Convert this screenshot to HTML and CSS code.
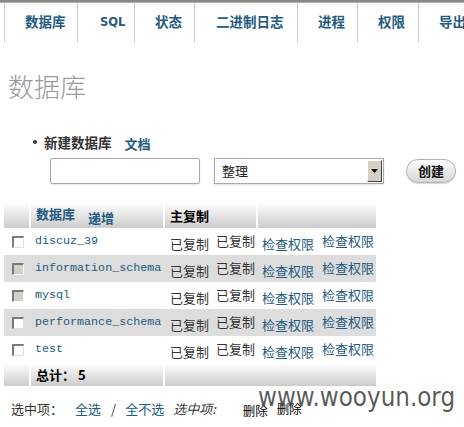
FILE: index.html
```html
<!DOCTYPE html>
<html>
<head>
<meta charset="utf-8">
<link rel="stylesheet" href="styles.css">
</head>
<body>
<div class="topbar"></div>
<nav class="tabs">
  <a class="tab t1">数据库</a>
  <a class="tab t2">SQL</a>
  <a class="tab t3">状态</a>
  <a class="tab t4">二进制日志</a>
  <a class="tab t5">进程</a>
  <a class="tab t6">权限</a>
  <a class="tab t7">导出</a>
</nav>
<h2 class="title">数据库</h2>
<div class="create">
  <div class="create-head">
    <span class="bullet"></span>
    <span class="create-label">新建数据库</span>
    <a class="doc">文档</a>
  </div>
  <div class="create-form">
    <span class="input"></span>
    <span class="select"><span class="select-text">整理</span><span class="select-btn"><svg width="7" height="4" viewBox="0 0 7 4"><path d="M0 0H7L3.5 4Z" fill="#000"/></svg></span></span>
    <span class="button">创建</span>
  </div>
</div>
<table class="dbtable">
  <colgroup>
    <col class="c1"><col class="c2"><col class="c3"><col class="c4"><col class="c5"><col class="c6">
  </colgroup>
  <thead>
    <tr class="grad head">
      <th></th>
      <th><span class="hlink">数据库</span><span class="hsort">递增</span></th>
      <th colspan="2" class="hblack">主复制</th>
      <th colspan="2"></th>
    </tr>
  </thead>
  <tbody>
    <tr>
      <td><span class="cb"></span></td>
      <td class="name">discuz_39</td>
      <td class="rep">已复制</td><td class="rep up">已复制</td>
      <td class="chk">检查权限</td><td class="chk up">检查权限</td>
    </tr>
    <tr class="alt">
      <td><span class="cb dis"></span></td>
      <td class="name">information_schema</td>
      <td class="rep">已复制</td><td class="rep up">已复制</td>
      <td class="chk">检查权限</td><td class="chk up">检查权限</td>
    </tr>
    <tr>
      <td><span class="cb dis"></span></td>
      <td class="name">mysql</td>
      <td class="rep">已复制</td><td class="rep up">已复制</td>
      <td class="chk">检查权限</td><td class="chk up">检查权限</td>
    </tr>
    <tr class="alt">
      <td><span class="cb"></span></td>
      <td class="name">performance_schema</td>
      <td class="rep">已复制</td><td class="rep up">已复制</td>
      <td class="chk">检查权限</td><td class="chk up">检查权限</td>
    </tr>
    <tr>
      <td><span class="cb"></span></td>
      <td class="name">test</td>
      <td class="rep">已复制</td><td class="rep up">已复制</td>
      <td class="chk">检查权限</td><td class="chk up">检查权限</td>
    </tr>
  </tbody>
  <tfoot>
    <tr class="grad total">
      <th></th>
      <th class="hblack">总计： 5</th>
      <th colspan="4"></th>
    </tr>
  </tfoot>
</table>
<div class="footer">
  <span class="f-label">选中项：</span>
  <a class="f-link">全选</a>
  <span class="f-sep">/</span>
  <a class="f-link f-none">全不选</a>
  <span class="f-italic">选中项:</span>
  <span class="f-del low">删除</span>
  <span class="f-del">删除</span>
</div>
<div class="watermark">www.wooyun.org</div>
</body>
</html>
```
FILE: styles.css
```css
html, body {
  margin: 0;
  padding: 0;
  background: #fff;
  overflow: hidden;
}
body {
  width: 464px;
  height: 427px;
  position: relative;
  font-family: "Noto Sans CJK SC", "DejaVu Sans", sans-serif;
  font-size: 13px;
  color: #333;
}
.topbar {
  height: 3px;
  background: linear-gradient(#8a8a8a 0, #8a8a8a 2px, #b0b0b0 2px);
}
.tabs {
  display: flex;
  margin-left: 4px;
  height: 39px;
  white-space: nowrap;
}
.tab {
  display: block;
  flex: none;
  box-sizing: border-box;
  border-left: 1px solid #ccc;
  padding: 9px 0 0 20px;
  font-weight: bold;
  font-size: 13.5px;
  line-height: 18px;
  color: #235a81;
}
.t1 { width: 73px; }
.t2 { width: 57px; padding-left: 22px; font-family: "DejaVu Sans", sans-serif; font-size: 11.5px; padding-top: 10px; }
.t3 { width: 60px; }
.t4 { width: 103px; padding-left: 21px; }
.t5 { width: 60px; }
.t6 { width: 61px; }
.t7 { width: 60px; }
.title {
  margin: 29px 0 0 8px;
  font-size: 26px;
  line-height: 30px;
  font-weight: 300;
  color: #9a9a9a;
}
.create {
  margin: 30px 0 0 33px;
}
.create-head {
  display: flex;
  align-items: center;
  height: 22px;
}
.bullet {
  width: 4px;
  height: 4px;
  border-radius: 50%;
  background: #333;
  margin-right: 7px;
}
.create-label {
  font-weight: bold;
  font-size: 13.5px;
  color: #333;
}
.doc {
  margin-left: 13px;
  margin-top: 3px;
  font-weight: bold;
  color: #235a81;
}
.create-form {
  display: flex;
  align-items: center;
  margin: 5px 0 0 17px;
}
.input {
  width: 148px;
  height: 24px;
  border: 1px solid #a9a9a9;
  border-radius: 2px;
  box-shadow: 0 1px 2px rgba(0,0,0,0.12);
}
.select {
  display: flex;
  align-items: stretch;
  width: 168px;
  height: 24px;
  margin-left: 14px;
  border: 1px solid #a9a9a9;
  box-shadow: 0 1px 2px rgba(0,0,0,0.12);
}
.select-text {
  flex: 1;
  padding-left: 7px;
  line-height: 24px;
  color: #222;
}
.select-btn {
  width: 13px;
  margin: 1px;
  background: #d4d0c8;
  border-top: 1px solid #fff;
  border-left: 1px solid #fff;
  border-right: 1px solid #404040;
  border-bottom: 1px solid #404040;
  display: flex;
  align-items: center;
  justify-content: center;
}
.button {
  margin-left: 22px;
  width: 48px;
  height: 22px;
  border: 1px solid #b0b0b0;
  border-radius: 12px;
  background: linear-gradient(#ffffff, #e6e6e6 60%, #d6d6d6);
  box-shadow: 0 1px 1px rgba(0,0,0,0.15);
  text-align: center;
  line-height: 22px;
  font-weight: bold;
  color: #111;
}
.dbtable {
  margin: 18px 0 0 4px;
  border-collapse: collapse;
  table-layout: fixed;
  width: 372px;
}
.c1 { width: 26px; }
.c2 { width: 134px; }
.c3 { width: 48px; }
.c4 { width: 45px; }
.c5 { width: 60px; }
.c6 { width: 59px; }
.dbtable th, .dbtable td {
  padding: 0;
  text-align: left;
  white-space: nowrap;
  overflow: visible;
  line-height: 17px;
}
.grad th {
  background: linear-gradient(#ffffff, #cccccc);
  border-left: 2px solid #fff;
  font-weight: bold;
  padding-left: 5px;
}
.grad th:first-child { border-left: none; }
.head { height: 26px; }
.total { height: 23px; }
.hlink {
  color: #235a81;
  font-weight: bold;
  vertical-align: 2px;
}
.hsort {
  margin-left: 13px;
  color: #235a81;
  font-weight: bold;
  vertical-align: -2px;
}
.hblack { color: #000; }
.dbtable tbody tr { height: 27px; }
.dbtable tbody td { vertical-align: middle; }
.dbtable tbody tr.alt td { background: #dddddd; }
.dbtable td:first-child { padding-left: 8px; }
.cb {
  display: block;
  width: 9px;
  height: 9px;
  border-top: 2px solid #7a7a7a;
  border-left: 2px solid #7a7a7a;
  border-right: 1px solid #e0e0e0;
  border-bottom: 1px solid #e0e0e0;
  background: #fff;
}
.cb.dis { background: #d4d0c8; border-right-color: #fff; border-bottom-color: #fff; }
.name {
  font-family: "Liberation Mono", monospace;
  font-size: 11.7px;
  color: #235a81;
  padding-left: 5px !important;
}
.rep { color: #333; padding-left: 6px !important; }
.rep.up { padding-left: 4px !important; }
.chk { color: #235a81; padding-left: 5px !important; }
.rep:not(.up), .chk:not(.up) { padding-top: 3px !important; }
.up { padding-bottom: 3px !important; }
.footer {
  display: flex;
  align-items: center;
  margin: 12px 0 0 11px;
  height: 20px;
  white-space: nowrap;
}
.f-label { color: #333; }
.f-link { color: #235a81; margin-left: 12px; }
.f-sep { margin: 0 9px 0 10px; color: #333; }
.f-none { margin-left: 0; }
.f-italic { font-style: italic; margin-left: 9px; color: #333; }
.f-del { color: #000; margin-left: 9px; font-size: 12.5px; }
.f-del.low { margin-left: 27px; margin-top: 4px; }
.watermark {
  position: absolute;
  left: 258px;
  top: 381px;
  font-family: "DejaVu Sans", sans-serif;
  font-size: 27px;
  color: rgba(60,60,60,0.85);
  transform: scaleX(0.855);
  transform-origin: left top;
}
```
